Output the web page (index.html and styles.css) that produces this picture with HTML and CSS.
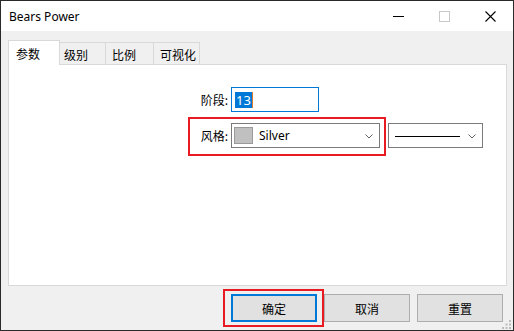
FILE: index.html
```html
<!DOCTYPE html>
<html>
<head>
<meta charset="utf-8">
<link rel="stylesheet" href="styles.css">
</head>
<body>
<div class="win">
  <div class="titlebar">
    <span class="title">Bears Power</span>
    <div class="ctrls">
      <span class="ctrl"><svg width="11" height="11" viewBox="0 0 11 11"><path d="M0 5.5H11" stroke="#000" stroke-width="1"/></svg></span>
      <span class="ctrl"><svg width="11" height="11" viewBox="0 0 11 11"><rect x="0.5" y="0.5" width="10" height="10" fill="none" stroke="#c8c8c8" stroke-width="1"/></svg></span>
      <span class="ctrl"><svg width="11" height="11" viewBox="0 0 11 11"><path d="M0.5 0.5L10.5 10.5M10.5 0.5L0.5 10.5" stroke="#000" stroke-width="1.1"/></svg></span>
    </div>
  </div>
  <div class="client">
    <div class="tabs">
      <div class="tab active">参数</div>
      <div class="tab t2">级别</div>
      <div class="tab t3">比例</div>
      <div class="tab t4">可视化</div>
    </div>
    <div class="panel">
      <div class="row1">
        <span class="lbl">阶段:</span>
        <div class="input"><span class="sel">13</span><span class="caret"></span></div>
      </div>
      <div class="row2">
        <div class="mark">
          <span class="lbl">风格:</span>
          <div class="combo">
            <span class="swatch"></span>
            <span class="ctext">Silver</span>
            <svg class="chev" width="8" height="5" viewBox="0 0 8 5"><path d="M0.5 0.5L4 4L7.5 0.5" fill="none" stroke="#606060" stroke-width="1"/></svg>
          </div>
        </div>
        <div class="combo lcombo">
          <span class="lsample"></span>
          <svg class="chev" width="8" height="5" viewBox="0 0 8 5"><path d="M0.5 0.5L4 4L7.5 0.5" fill="none" stroke="#606060" stroke-width="1"/></svg>
        </div>
      </div>
    </div>
    <div class="buttons">
      <div class="bmark"><div class="btn default">确定</div></div>
      <div class="btn">取消</div>
      <div class="btn b3">重置</div>
    </div>
  </div>
  <svg class="grip" width="10" height="10" viewBox="0 0 10 10">
    <rect x="7" y="0" width="2" height="2" fill="#bcbcbc"/>
    <rect x="3.5" y="3.5" width="2" height="2" fill="#bcbcbc"/>
    <rect x="7" y="3.5" width="2" height="2" fill="#bcbcbc"/>
    <rect x="0" y="7" width="2" height="2" fill="#bcbcbc"/>
    <rect x="3.5" y="7" width="2" height="2" fill="#bcbcbc"/>
    <rect x="7" y="7" width="2" height="2" fill="#bcbcbc"/>
  </svg>
</div>
</body>
</html>
```

FILE: styles.css
```css
* { box-sizing: border-box; }
html, body { margin: 0; padding: 0; background: #1e1e1e; }
body {
  font-family: "Noto Sans", "Noto Sans CJK SC", sans-serif;
  font-size: 12px;
  color: #000;
}
.win {
  position: relative;
  width: 514px;
  height: 331px;
  border: 1px solid #2a2a2a;
  background: #f0f0f0;
  display: flex;
  flex-direction: column;
}
.titlebar {
  height: 30px;
  background: #fff;
  display: flex;
  align-items: center;
  justify-content: space-between;
}
.title {
  padding-left: 8px;
  font-size: 12px;
  line-height: 14px;
  margin-top: 1px;
}
.ctrls { display: flex; height: 30px; }
.ctrl {
  width: 46px;
  height: 30px;
  display: flex;
  align-items: center;
  justify-content: center;
}
.client {
  flex: 1;
  padding: 9px 6px 0 7px;
  display: flex;
  flex-direction: column;
}
.tabs {
  display: flex;
  align-items: flex-end;
  height: 25px;
  margin-bottom: -1px;
  position: relative;
  z-index: 2;
}
.tab {
  height: 22px;
  margin-bottom: 1px;
  border: 1px solid #d9d9d9;
  border-bottom: none;
  background: #f0f0f0;
  display: flex;
  align-items: center;
  justify-content: flex-start;
  font-family: "Noto Sans CJK SC", sans-serif;
  font-size: 12px;
  padding-top: 1px;
}
.tab.active {
  width: 52px;
  height: 25px;
  margin-bottom: 0;
  background: #fff;
  position: relative;
  z-index: 3;
  padding: 0 0 0 7px;
}
.t2 { width: 47px; margin-left: -1px; padding-left: 4px; }
.t3 { width: 49px; margin-left: -1px; padding-left: 6px; }
.t4 { width: 47px; margin-left: -1px; padding-left: 6px; }
.panel {
  width: 499px;
  height: 222px;
  border: 1px solid #d9d9d9;
  background: #fff;
  padding: 22px 0 0 179px;
}
.row1 {
  display: flex;
  align-items: center;
  margin-left: 2px;
}
.lbl {
  width: 41px;
  text-align: right;
  padding-right: 3px;
  font-family: "Noto Sans CJK SC", sans-serif;
  font-size: 12px;
}
.input {
  width: 88px;
  height: 25px;
  border: 1px solid #0078d7;
  display: flex;
  align-items: center;
  padding-left: 3px;
}
.sel {
  background: #0078d7;
  color: #fff;
  font-size: 13px;
  line-height: 16px;
  padding: 0 1px;
}
.caret {
  width: 1px;
  height: 16px;
  background: #e07a2a;
}
.row2 {
  display: flex;
  align-items: flex-start;
  margin-top: 5px;
}
.mark {
  display: flex;
  align-items: center;
  border: 2px solid #e81b23;
  padding: 4px 4px 6px 0;
}
.combo {
  width: 149px;
  height: 25px;
  border: 1px solid #7a7a7a;
  background: #fff;
  display: flex;
  align-items: center;
  padding-left: 2px;
  position: relative;
}
.swatch {
  width: 19px;
  height: 17px;
  background: #c0c0c0;
  border: 1px solid #9a9a9a;
}
.ctext {
  margin-left: 6px;
  font-size: 12px;
}
.chev {
  position: absolute;
  right: 6px;
  top: 10px;
}
.lcombo {
  width: 95px;
  margin-left: 2px;
  margin-top: 6px;
  padding-left: 6px;
}
.lsample {
  width: 65px;
  height: 1px;
  background: #000;
  margin-top: 1px;
}
.buttons {
  display: flex;
  justify-content: flex-end;
  align-items: center;
  margin-top: 3px;
  padding-right: 4px;
}
.bmark {
  border: 2px solid #e81b23;
  padding: 3px 5px 3px 6px;
}
.btn {
  width: 86px;
  height: 28px;
  border: 1px solid #adadad;
  background: #e1e1e1;
  display: flex;
  align-items: center;
  justify-content: center;
  font-family: "Noto Sans CJK SC", sans-serif;
  font-size: 12px;
}
.btn.default {
  border: 2px solid #0078d7;
}
.b3 { margin-left: 7px; }
.grip {
  position: absolute;
  right: 1px;
  bottom: 0px;
}
```
